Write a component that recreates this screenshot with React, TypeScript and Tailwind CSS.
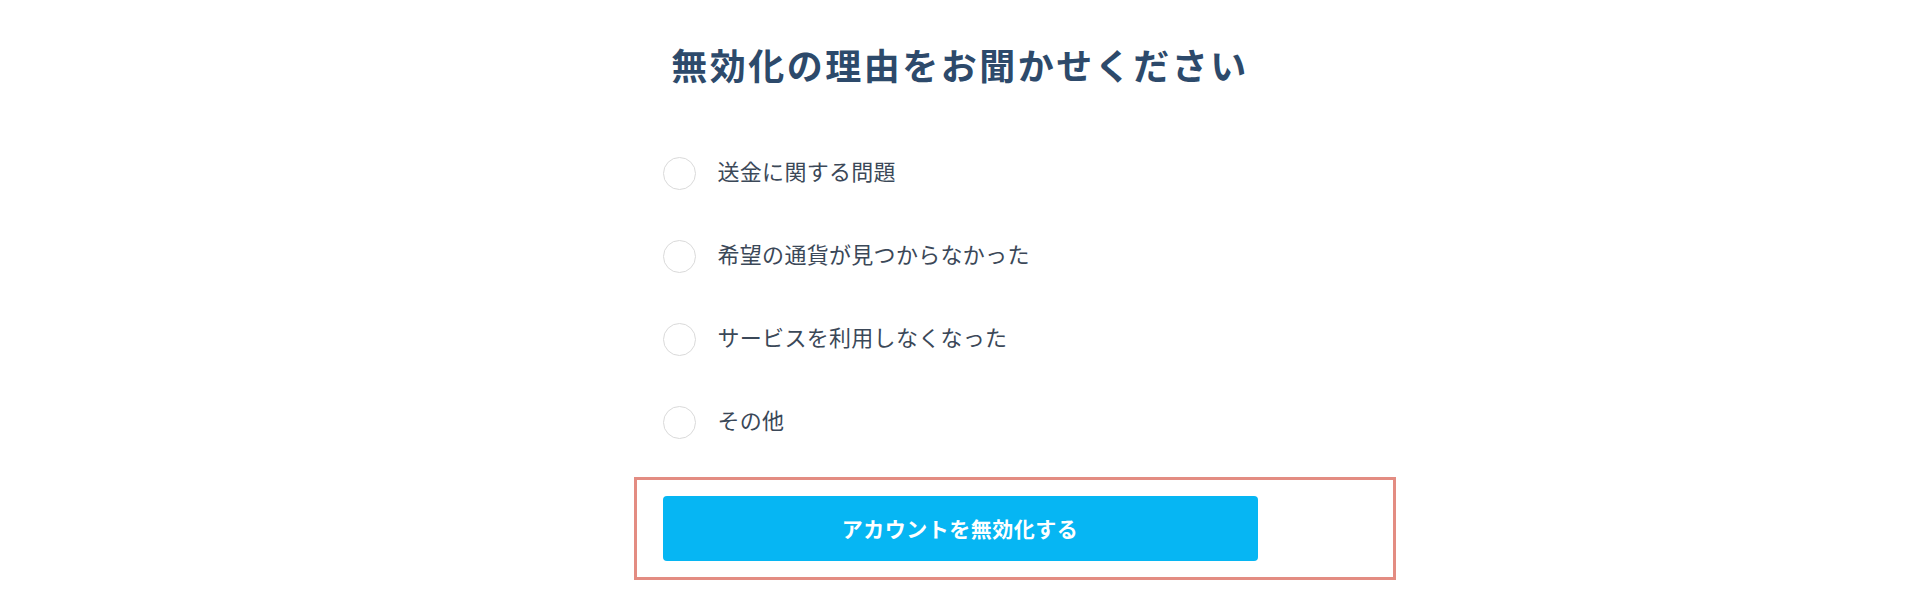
import { useState } from "react";

const reasons = [
  "送金に関する問題",
  "希望の通貨が見つからなかった",
  "サービスを利用しなくなった",
  "その他",
];

export default function App() {
  const [selected, setSelected] = useState<number | null>(null);

  return (
    <div
      className="min-h-[605px] w-full bg-white"
      style={{ fontFamily: '"Noto Sans CJK JP", "Noto Sans", sans-serif' }}
    >
      <div className="mx-auto flex w-[595px] flex-col pt-[40px]">
        <h1 className="h-[48px] whitespace-nowrap text-center text-[36px] font-bold leading-[48px] tracking-[2.5px] text-[#2d4a6b]">
          無効化の理由をお聞かせください
        </h1>

        <div className="mt-[68px] flex flex-col gap-[49px]">
          {reasons.map((reason, i) => (
            <label
              key={reason}
              className="flex h-[34px] cursor-pointer items-center"
              onClick={() => setSelected(i)}
            >
              <span
                className={`flex h-[33px] w-[33px] shrink-0 items-center justify-center rounded-full border ${
                  selected === i ? "border-[#06b6f3]" : "border-[#dadada]"
                }`}
              >
                {selected === i && (
                  <span className="h-[15px] w-[15px] rounded-full bg-[#06b6f3]" />
                )}
              </span>
              <span className="ml-[22px] whitespace-nowrap pb-[7px] text-[22px] leading-none tracking-[0.3px] text-[#3b4858]">
                {reason}
              </span>
            </label>
          ))}
        </div>

        <div className="mt-[38px] -ml-[29px] -mr-[138px] border-[3px] border-[#e38c82] pt-[16px] pr-[135px] pb-[16px] pl-[26px]">
          <button className="flex h-[65px] w-full items-center justify-center rounded-[4px] bg-[#06b6f3] text-[21px] font-bold tracking-[0.5px] text-white">
            アカウントを無効化する
          </button>
        </div>
      </div>
    </div>
  );
}
